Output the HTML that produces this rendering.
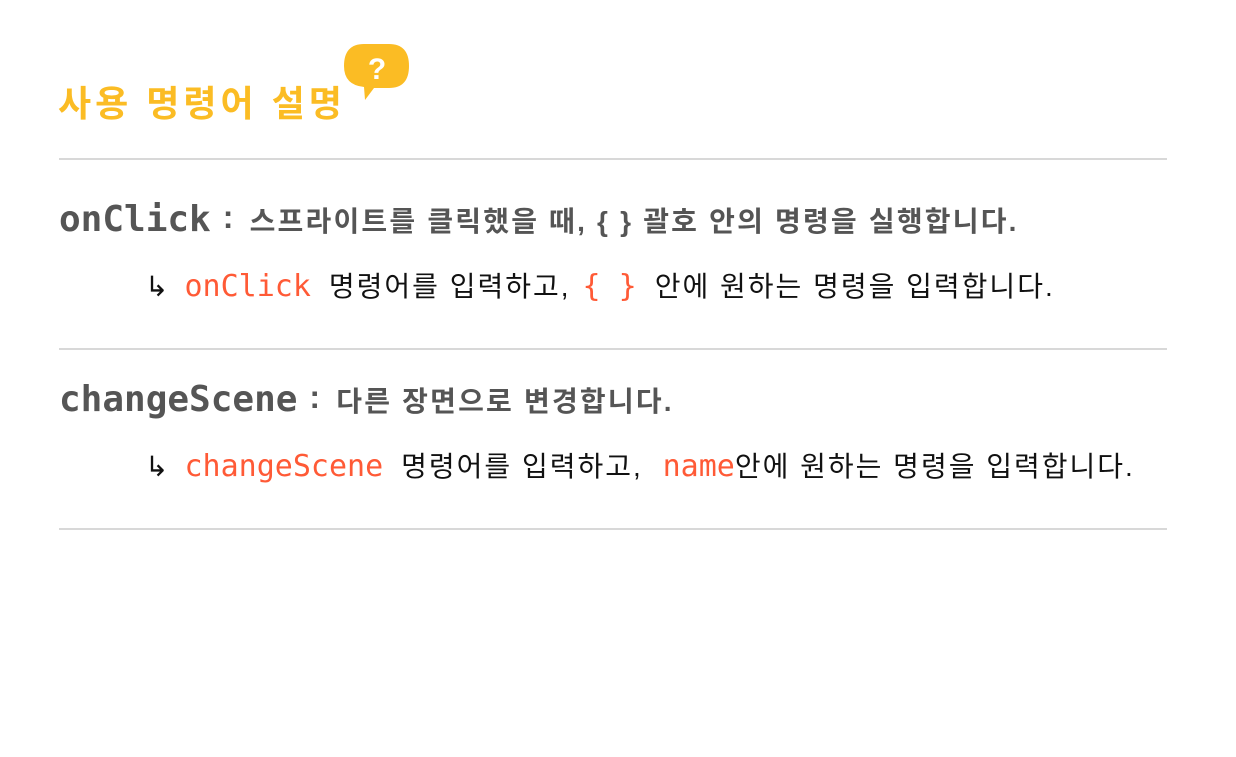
<!DOCTYPE html>
<html><head><meta charset="utf-8"><style>
body{margin:0;width:1236px;height:757px;background:#fff;font-family:"Liberation Sans","Noto Sans CJK KR",sans-serif;position:relative;overflow:hidden}
.a{position:absolute;white-space:nowrap}
.t{left:58px;top:79px;font-size:36px;font-weight:bold;color:#fbbc24;letter-spacing:4px;line-height:50px}
.hr{position:absolute;left:59px;width:1108px;height:2px;background:#d8d8d8}
.h{left:59px;font-size:28px;font-weight:bold;color:#555;line-height:40px;letter-spacing:2.2px}
.m{font-family:"DejaVu Sans Mono","Liberation Mono",monospace;font-size:36px;font-weight:bold;letter-spacing:0}
.c{margin:0 14px 0 12px;font-size:32px;position:relative;top:-3px}
.s{left:145px;font-size:28px;color:#111;line-height:40px;letter-spacing:2px}
.o{font-family:"DejaVu Sans Mono","Liberation Mono",monospace;color:#ff5a36;font-size:30px;letter-spacing:0;margin:0 18px 0 14px}
.o2{margin:0 0 0 14px}
</style></head><body>
<div class="a t">사용 명령어 설명</div>
<svg class="a" style="left:342px;top:43px" width="70" height="60" viewBox="0 0 70 60">
<path d="M22 1H47Q67 1 67 23Q67 45 47 45H32L23 57L22 44Q2 42 2 23Q2 1 22 1Z" fill="#fbbc24"/>
<text x="35" y="36" text-anchor="middle" font-family="Liberation Sans" font-weight="bold" font-size="30" fill="#fff">?</text>
</svg>
<div class="hr" style="top:158px"></div>
<div class="a h" style="top:200px"><span class="m">onClick</span><span class="c">:</span>스프라이트를 클릭했을 때, { } 괄호 안의 명령을 실행합니다.</div>
<div class="a s" style="top:267px">↳<span class="o">onClick</span>명령어를 입력하고,<span class="o" style="margin-left:12px">{ }</span>안에 원하는 명령을 입력합니다.</div>
<div class="hr" style="top:348px"></div>
<div class="a h" style="top:380px"><span class="m">changeScene</span><span class="c">:</span>다른 장면으로 변경합니다.</div>
<div class="a s" style="top:447px">↳<span class="o">changeScene</span>명령어를 입력하고, <span class="o o2" style="margin-left:10px">name</span>안에 원하는 명령을 입력합니다.</div>
<div class="hr" style="top:528px"></div>
</body></html>
